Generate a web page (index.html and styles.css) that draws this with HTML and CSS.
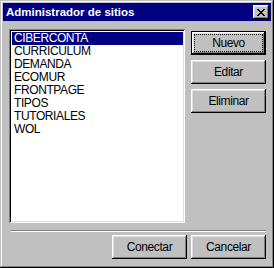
FILE: index.html
```html
<!DOCTYPE html>
<html>
<head>
<meta charset="utf-8">
<link rel="stylesheet" href="styles.css">
</head>
<body>
<div class="window">
  <div class="titlebar">
    <span class="title">Administrador de sitios</span>
    <button class="close" aria-label="Cerrar">
      <svg width="8" height="7" viewBox="0 0 8 7"><path d="M0 0h2v1h1v1h2V1h1V0h2v1H7v1H6v1H5v1h1v1h1v1h1v1H6V6H5V5H3v1H2v1H0V6h1V5h1V4h1V3H2V2H1V1H0z" fill="#000"/></svg>
    </button>
  </div>
  <div class="content">
    <div class="main">
      <ul class="listbox">
        <li class="item selected">CIBERCONTA</li>
        <li class="item">CURRICULUM</li>
        <li class="item">DEMANDA</li>
        <li class="item">ECOMUR</li>
        <li class="item">FRONTPAGE</li>
        <li class="item">TIPOS</li>
        <li class="item">TUTORIALES</li>
        <li class="item">WOL</li>
      </ul>
      <div class="side">
        <button class="btn default"><span class="focus">Nuevo</span></button>
        <button class="btn">Editar</button>
        <button class="btn">Eliminar</button>
      </div>
    </div>
    <div class="separator"></div>
    <div class="footer">
      <button class="btn">Conectar</button>
      <button class="btn">Cancelar</button>
    </div>
  </div>
</div>
</body>
</html>
```

FILE: styles.css
```css
* { box-sizing: border-box; }
html, body { margin: 0; padding: 0; background: #c0c0c0; }
body { width: 274px; height: 268px; overflow: hidden; font-family: "Liberation Sans", Arial, sans-serif; font-size: 12px; letter-spacing: -0.4px; }

.window {
  width: 274px;
  height: 268px;
  background: #c0c0c0;
  padding: 3px;
  display: flex;
  flex-direction: column;
  box-shadow: inset -1px -1px #000, inset 1px 1px #c0c0c0, inset -2px -2px #808080, inset 2px 2px #fff;
}

.titlebar {
  height: 18px;
  background: #000080;
  display: flex;
  align-items: center;
  justify-content: space-between;
  padding: 0 2px 0 3px;
}
.title { color: #fff; font-weight: bold; font-size: 11.5px; letter-spacing: 0; }

.close {
  width: 16px;
  height: 14px;
  padding: 0;
  border: 0;
  background: #c0c0c0;
  display: flex;
  align-items: center;
  justify-content: center;
  box-shadow: inset -1px -1px #000, inset 1px 1px #fff, inset -2px -2px #808080, inset 2px 2px #dfdfdf;
}
.close svg { display: block; margin-left: -1px; }

.content {
  flex: 1;
  display: flex;
  flex-direction: column;
  padding: 8px 5px 6px 6px;
}

.main { display: flex; gap: 6px; }

.listbox {
  list-style: none;
  margin: 0;
  width: 176px;
  height: 194px;
  background: #fff;
  box-shadow: inset 1px 1px #808080, inset -1px -1px #fff, inset 2px 2px #000, inset -2px -2px #dfdfdf;
  padding: 3px 2px 2px 3px;
}
.item {
  height: 13px;
  line-height: 13px;
  padding-left: 2px;
  color: #000;
  white-space: nowrap;
}
.item.selected { background: #000080; color: #fff; }

.side { display: flex; flex-direction: column; gap: 5px; padding-top: 2px; }

.btn {
  width: 75px;
  height: 24px;
  padding: 0;
  border: 0;
  background: #c0c0c0;
  font-family: "Liberation Sans", Arial, sans-serif;
  font-size: 12px;
  letter-spacing: -0.4px;
  color: #000;
  box-shadow: inset -1px -1px #000, inset 1px 1px #fff, inset -2px -2px #808080, inset 2px 2px #dfdfdf;
}
.btn.default {
  box-shadow: inset 0 0 0 1px #000, inset -2px -2px #000, inset 2px 2px #fff, inset -3px -3px #808080, inset 3px 3px #dfdfdf;
  padding: 4px;
}
.btn .focus {
  display: flex;
  align-items: center;
  justify-content: center;
  height: 100%;
  outline: 1px dotted #000;
}

.separator {
  margin: 7px 0 0 2px;
  height: 2px;
  border-top: 1px solid #808080;
  border-bottom: 1px solid #fff;
}

.footer { display: flex; justify-content: flex-end; gap: 4px; margin-top: 3px; }
```
